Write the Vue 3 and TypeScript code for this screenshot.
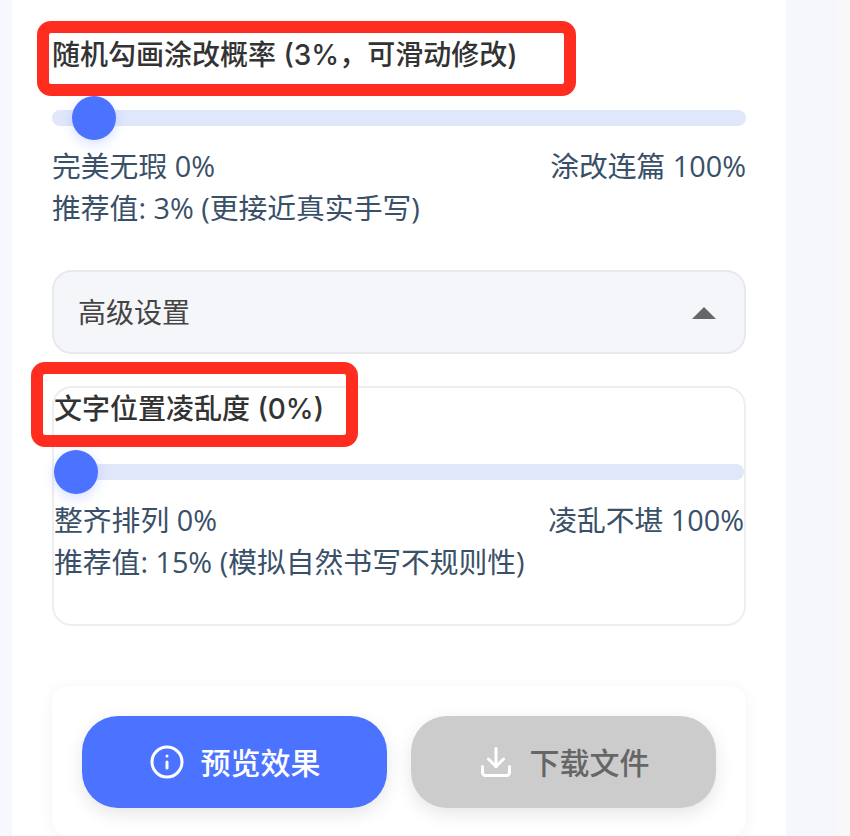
<script setup lang="ts">
const thumbSize = 44
const thumbLeft = (pct: number) => `calc((100% - ${thumbSize}px) * ${pct / 100})`
</script>

<template>
  <div class="page">
    <main class="card">
      <section class="first">
        <div class="label-wrap">
          <span class="mark mark-a"></span>
          <h3 class="label">随机勾画涂改概率 (3%，可滑动修改)</h3>
        </div>
        <div class="slider">
          <div class="track"></div>
          <div class="thumb" :style="{ left: thumbLeft(3) }"></div>
        </div>
        <div class="ends"><span>完美无瑕 0%</span><span>涂改连篇 100%</span></div>
        <p class="hint">推荐值: 3% (更接近真实手写)</p>
      </section>

      <div class="adv-head">
        <span class="adv-title">高级设置</span>
        <svg class="caret" width="24" height="12" viewBox="0 0 24 12"><path d="M12 0L24 12H0Z" fill="#666" /></svg>
      </div>

      <section class="adv-body">
        <div class="label-wrap">
          <span class="mark mark-b"></span>
          <h3 class="label">文字位置凌乱度 (0%)</h3>
        </div>
        <div class="slider">
          <div class="track"></div>
          <div class="thumb" :style="{ left: thumbLeft(0) }"></div>
        </div>
        <div class="ends"><span>整齐排列 0%</span><span>凌乱不堪 100%</span></div>
        <p class="hint">推荐值: 15% (模拟自然书写不规则性)</p>
      </section>

      <div class="actions">
        <button class="btn primary" type="button">
          <svg width="36" height="36" viewBox="0 0 24 24" fill="none" stroke="#fff" stroke-width="2" stroke-linecap="round" stroke-linejoin="round">
            <circle cx="12" cy="12" r="10" />
            <path d="M12 16v-4" />
            <path d="M12 8h.01" />
          </svg>
          <span class="btn-text">预览效果</span>
        </button>
        <button class="btn disabled" type="button">
          <svg width="36" height="36" viewBox="0 0 24 24" fill="none" stroke="#fff" stroke-width="2" stroke-linecap="round" stroke-linejoin="round">
            <path d="M21 15v4a2 2 0 0 1-2 2H5a2 2 0 0 1-2-2v-4" />
            <path d="M7 10l5 5 5-5" />
            <path d="M12 15V3" />
          </svg>
          <span class="btn-text">下载文件</span>
        </button>
      </div>
    </main>
    <div class="side"></div>
    <div class="edge"></div>
  </div>
</template>

<style>
html, body { margin: 0; background: #fff; }
</style>

<style scoped>
.page {
  display: flex;
  width: 850px;
  height: 836px;
  overflow: hidden;
  background: #f6f8fe;
  padding-left: 12px;
  box-sizing: border-box;
  font-family: Inter, "Noto Sans CJK SC", sans-serif;
}
.card {
  width: 774px;
  flex: none;
  box-sizing: border-box;
  background: #fff;
  padding: 34px 40px 0;
}
.side { width: 50px; flex: none; background: #f5f7fc; }
.edge { flex: 1; background: #f8f8f8; }

.label-wrap { position: relative; height: 42px; }
.label {
  margin: 0;
  font-size: 28px;
  line-height: 42px;
  font-weight: 500;
  color: #333;
  white-space: nowrap;
}
.mark {
  position: absolute;
  box-sizing: border-box;
  border: 12px solid #ff2d20;
  border-radius: 14px;
  pointer-events: none;
  z-index: 2;
}
.mark-a { left: -15px; top: -13px; width: 539px; height: 75px; }
.mark-b { left: -23px; top: -26px; width: 327px; height: 85px; }

.slider { position: relative; height: 44px; margin-top: 20px; }
.track {
  position: absolute;
  left: 0;
  right: 0;
  top: 14px;
  height: 16px;
  border-radius: 8px;
  background: #e0e7fb;
}
.thumb {
  position: absolute;
  top: 0;
  width: 44px;
  height: 44px;
  border-radius: 50%;
  background: #4c73ff;
  box-shadow: 0 4px 12px rgba(76, 115, 255, 0.22);
}
.ends {
  display: flex;
  justify-content: space-between;
  margin-top: 4px;
  font-family: "Open Sans", "Noto Sans CJK SC", sans-serif;
  font-size: 28.8px;
  font-weight: 400;
  line-height: 43px;
  color: #3a5068;
}
.hint {
  margin: 0;
  font-family: "Open Sans", "Noto Sans CJK SC", sans-serif;
  font-size: 28.8px;
  font-weight: 400;
  line-height: 42px;
  color: #3a5068;
  white-space: nowrap;
}
.adv-head {
  display: flex;
  align-items: center;
  justify-content: space-between;
  box-sizing: border-box;
  height: 84px;
  margin-top: 41px;
  padding: 0 28px 0 24px;
  background: #f5f6fa;
  border: 2px solid #e8e9ec;
  border-radius: 20px;
  font-size: 28px;
  color: #444;
}
.adv-title { margin-top: -2px; }
.caret { margin-top: 1px; }
.adv-body {
  box-sizing: border-box;
  height: 240px;
  margin-top: 32px;
  border: 2px solid #eee;
  border-radius: 20px;
}
.actions {
  display: flex;
  gap: 24px;
  box-sizing: border-box;
  height: 150px;
  margin-top: 60px;
  padding: 30px;
  background: #fff;
  border-radius: 16px;
  box-shadow: 0 2px 16px rgba(0, 0, 0, 0.05);
}
.btn {
  flex: 1;
  height: 92px;
  display: flex;
  align-items: center;
  justify-content: center;
  gap: 16px;
  border: 0;
  border-radius: 36px;
  font-family: inherit;
  font-size: 30px;
  font-weight: 500;
  box-shadow: 0 6px 18px rgba(0, 0, 0, 0.1);
}
.btn-text { margin-top: -3px; }
.primary { background: #4c73ff; color: #fff; }
.disabled { background: #ccc; color: #666; }
</style>
